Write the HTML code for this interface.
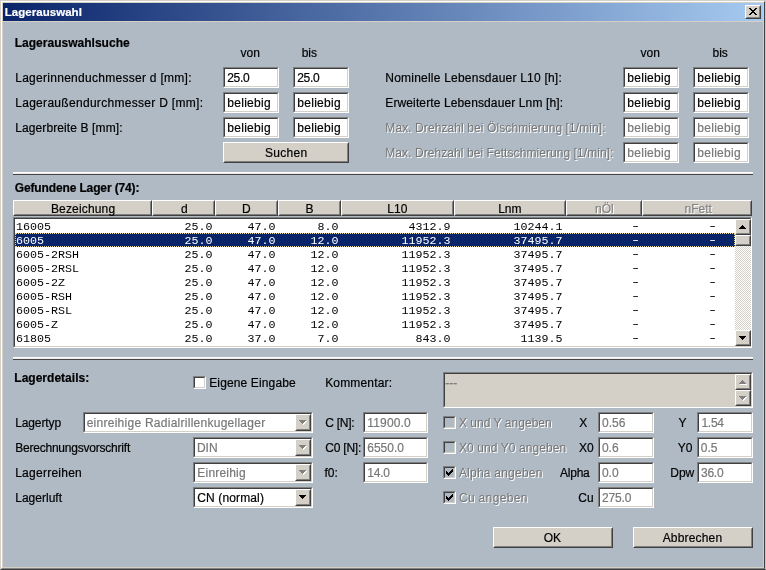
<!DOCTYPE html>
<html lang="de"><head><meta charset="utf-8"><title>Lagerauswahl</title>
<style>
html,body{margin:0;padding:0}
body{width:766px;height:570px;overflow:hidden;background:#b0bac5;position:relative;font-family:"Liberation Sans",sans-serif;font-size:12px;color:#000}
#frame{position:absolute;left:0;top:0;width:766px;height:570px;box-sizing:border-box;border:1px solid;border-color:#d4d0c8 #c8c8c8 #404040 #d4d0c8;}
#frame2{position:absolute;left:1px;top:1px;width:764px;height:568px;box-sizing:border-box;border:1px solid;border-color:#fff #404040 #808080 #fff;}
#frame3{position:absolute;left:2px;top:2px;width:762px;height:566px;box-sizing:border-box;border:1px solid #d4d0c8;}
#title{position:absolute;left:3px;top:3px;width:760px;height:18px;background:linear-gradient(to right,#0a246a,#a6caf0)}
#tline{position:absolute;left:3px;top:21px;width:760px;height:1px;background:#d4d0c8}
.t{position:absolute;white-space:nowrap;line-height:14px;height:14px;-webkit-text-stroke:0.2px}
.w{color:#fff}
.g{color:#787878}
.dis{color:#767676;text-shadow:1px 1px 0 #fff;-webkit-text-stroke:0}
.hd{color:#848484;text-shadow:1px 1px 0 #fff}
.in{position:absolute;box-sizing:border-box;background:#fff;border:1px solid;border-color:#808080 #fff #fff #808080;}
.in::after{content:"";position:absolute;left:0;top:0;right:0;bottom:0;border:1px solid;border-color:#404040 #d4d0c8 #d4d0c8 #404040}
.ta{background:#d4d0c8}
.btn{position:absolute;box-sizing:border-box;background:#d4d0c8;border:1px solid;border-color:#fff #404040 #404040 #fff}
.btn::after{content:"";position:absolute;left:0;top:0;right:0;bottom:0;border:1px solid;border-color:#d4d0c8 #808080 #808080 #d4d0c8}
.hc{position:absolute;box-sizing:border-box;background:#d4d0c8;border:1px solid;border-color:#fff #404040 #404040 #fff}
.hc::after{content:"";position:absolute;left:0;top:0;right:0;bottom:0;border:1px solid;border-color:#d4d0c8 #808080 #808080 #d4d0c8}
.sep{position:absolute;height:2px;background:linear-gradient(#fff 0 1px,#ebe9e4 1px 2px);border-bottom:1px solid #454545}
.ar{position:absolute;left:3px;top:5px}
.cm{position:absolute;left:2px;top:2px}
.xg{position:absolute;left:3px;top:2px}
.ckd{background:#b0bac5}
.row{position:absolute;left:15px;width:720px;height:14px;font-family:"Liberation Mono",monospace;font-size:11.667px;line-height:16px}
.row.sel{background:#0a246a;color:#fff;outline:1px dotted #e8d8a0;outline-offset:-1px}
.c{position:absolute;top:0;white-space:pre}
.d{transform:scaleX(1.45);top:-1px}
#sb{position:absolute;left:735px;top:219px;width:16px;height:127px;background:repeating-conic-gradient(#fff 0 25%,#d4d0c8 0 50%) 0 0/2px 2px}
#txt{position:absolute;left:0;top:0;width:766px;height:570px;will-change:transform}
#close{left:745px;top:5px;width:16px;height:14px}
</style></head><body>
<div id="frame"></div><div id="frame2"></div><div id="frame3"></div>
<div id="title"></div><div id="tline"></div>
<div class="btn" id="close"><svg class="xg" width="8" height="7" viewBox="0 0 8 7" shape-rendering="crispEdges"><rect x="0" y="0" width="2" height="1" fill="#000"/><rect x="6" y="0" width="2" height="1" fill="#000"/><rect x="1" y="1" width="2" height="1" fill="#000"/><rect x="5" y="1" width="2" height="1" fill="#000"/><rect x="2" y="2" width="2" height="1" fill="#000"/><rect x="4" y="2" width="2" height="1" fill="#000"/><rect x="3" y="3" width="2" height="1" fill="#000"/><rect x="2" y="4" width="2" height="1" fill="#000"/><rect x="4" y="4" width="2" height="1" fill="#000"/><rect x="1" y="5" width="2" height="1" fill="#000"/><rect x="5" y="5" width="2" height="1" fill="#000"/><rect x="0" y="6" width="2" height="1" fill="#000"/><rect x="6" y="6" width="2" height="1" fill="#000"/></svg></div>
<div class="in" style="left:223px;top:67px;width:56px;height:21px"></div>
<div class="in" style="left:293px;top:67px;width:56px;height:21px"></div>
<div class="in" style="left:223px;top:92px;width:56px;height:21px"></div>
<div class="in" style="left:293px;top:92px;width:56px;height:21px"></div>
<div class="in" style="left:223px;top:117px;width:56px;height:21px"></div>
<div class="in" style="left:293px;top:117px;width:56px;height:21px"></div>
<div class="in" style="left:623px;top:67px;width:56px;height:21px"></div>
<div class="in" style="left:693px;top:67px;width:56px;height:21px"></div>
<div class="in" style="left:623px;top:92px;width:56px;height:21px"></div>
<div class="in" style="left:693px;top:92px;width:56px;height:21px"></div>
<div class="in" style="left:623px;top:117px;width:56px;height:21px"></div>
<div class="in" style="left:693px;top:117px;width:56px;height:21px"></div>
<div class="in" style="left:623px;top:142px;width:56px;height:21px"></div>
<div class="in" style="left:693px;top:142px;width:56px;height:21px"></div>
<div class="btn" style="left:223px;top:142px;width:126px;height:21px"></div>
<div class="sep" style="left:13px;top:172px;width:740px"></div>
<div class="sep" style="left:13px;top:357px;width:740px"></div>
<div class="hc" style="left:13px;top:200px;width:139px;height:16px"></div>
<div class="hc" style="left:152px;top:200px;width:63px;height:16px"></div>
<div class="hc" style="left:215px;top:200px;width:63px;height:16px"></div>
<div class="hc" style="left:278px;top:200px;width:63px;height:16px"></div>
<div class="hc" style="left:341px;top:200px;width:113px;height:16px"></div>
<div class="hc" style="left:454px;top:200px;width:112px;height:16px"></div>
<div class="hc" style="left:566px;top:200px;width:76px;height:16px"></div>
<div class="hc" style="left:642px;top:200px;width:110px;height:16px"></div>
<div class="in list" style="left:13px;top:217px;width:739px;height:131px"></div>
<div class="in" style="left:83px;top:412px;width:230px;height:21px"></div>
<div class="btn cb" style="left:295px;top:414px;width:16px;height:17px"><svg class="ar" width="9" height="6" viewBox="0 0 9 6" shape-rendering="crispEdges"><rect x="1" y="1" width="7" height="1" fill="#fff"/><rect x="2" y="2" width="5" height="1" fill="#fff"/><rect x="3" y="3" width="3" height="1" fill="#fff"/><rect x="4" y="4" width="1" height="1" fill="#fff"/><rect x="0" y="0" width="7" height="1" fill="#808080"/><rect x="1" y="1" width="5" height="1" fill="#808080"/><rect x="2" y="2" width="3" height="1" fill="#808080"/><rect x="3" y="3" width="1" height="1" fill="#808080"/></svg></div>
<div class="in" style="left:193px;top:437px;width:120px;height:21px"></div>
<div class="btn cb" style="left:295px;top:439px;width:16px;height:17px"><svg class="ar" width="9" height="6" viewBox="0 0 9 6" shape-rendering="crispEdges"><rect x="1" y="1" width="7" height="1" fill="#fff"/><rect x="2" y="2" width="5" height="1" fill="#fff"/><rect x="3" y="3" width="3" height="1" fill="#fff"/><rect x="4" y="4" width="1" height="1" fill="#fff"/><rect x="0" y="0" width="7" height="1" fill="#808080"/><rect x="1" y="1" width="5" height="1" fill="#808080"/><rect x="2" y="2" width="3" height="1" fill="#808080"/><rect x="3" y="3" width="1" height="1" fill="#808080"/></svg></div>
<div class="in" style="left:193px;top:462px;width:120px;height:21px"></div>
<div class="btn cb" style="left:295px;top:464px;width:16px;height:17px"><svg class="ar" width="9" height="6" viewBox="0 0 9 6" shape-rendering="crispEdges"><rect x="1" y="1" width="7" height="1" fill="#fff"/><rect x="2" y="2" width="5" height="1" fill="#fff"/><rect x="3" y="3" width="3" height="1" fill="#fff"/><rect x="4" y="4" width="1" height="1" fill="#fff"/><rect x="0" y="0" width="7" height="1" fill="#808080"/><rect x="1" y="1" width="5" height="1" fill="#808080"/><rect x="2" y="2" width="3" height="1" fill="#808080"/><rect x="3" y="3" width="1" height="1" fill="#808080"/></svg></div>
<div class="in" style="left:193px;top:487px;width:120px;height:21px"></div>
<div class="btn cb" style="left:295px;top:489px;width:16px;height:17px"><svg class="ar" width="9" height="6" viewBox="0 0 9 6" shape-rendering="crispEdges"><rect x="0" y="0" width="7" height="1" fill="#000"/><rect x="1" y="1" width="5" height="1" fill="#000"/><rect x="2" y="2" width="3" height="1" fill="#000"/><rect x="3" y="3" width="1" height="1" fill="#000"/></svg></div>
<div class="in" style="left:363px;top:412px;width:65px;height:21px"></div>
<div class="in" style="left:363px;top:437px;width:65px;height:21px"></div>
<div class="in" style="left:363px;top:462px;width:65px;height:21px"></div>
<div class="in" style="left:598px;top:412px;width:56px;height:21px"></div>
<div class="in" style="left:598px;top:437px;width:56px;height:21px"></div>
<div class="in" style="left:598px;top:462px;width:56px;height:21px"></div>
<div class="in" style="left:598px;top:487px;width:56px;height:21px"></div>
<div class="in" style="left:697px;top:412px;width:56px;height:21px"></div>
<div class="in" style="left:697px;top:437px;width:56px;height:21px"></div>
<div class="in" style="left:697px;top:462px;width:56px;height:21px"></div>
<div class="in ta" style="left:443px;top:372px;width:310px;height:36px"></div>
<div class="btn" style="left:735px;top:374px;width:16px;height:16px"><svg class="ar" width="9" height="6" viewBox="0 0 9 6" shape-rendering="crispEdges"><rect x="1" y="4" width="7" height="1" fill="#fff"/><rect x="2" y="3" width="5" height="1" fill="#fff"/><rect x="3" y="2" width="3" height="1" fill="#fff"/><rect x="4" y="1" width="1" height="1" fill="#fff"/><rect x="0" y="3" width="7" height="1" fill="#808080"/><rect x="1" y="2" width="5" height="1" fill="#808080"/><rect x="2" y="1" width="3" height="1" fill="#808080"/><rect x="3" y="0" width="1" height="1" fill="#808080"/></svg></div>
<div class="btn" style="left:735px;top:390px;width:16px;height:16px"><svg class="ar" width="9" height="6" viewBox="0 0 9 6" shape-rendering="crispEdges"><rect x="1" y="1" width="7" height="1" fill="#fff"/><rect x="2" y="2" width="5" height="1" fill="#fff"/><rect x="3" y="3" width="3" height="1" fill="#fff"/><rect x="4" y="4" width="1" height="1" fill="#fff"/><rect x="0" y="0" width="7" height="1" fill="#808080"/><rect x="1" y="1" width="5" height="1" fill="#808080"/><rect x="2" y="2" width="3" height="1" fill="#808080"/><rect x="3" y="3" width="1" height="1" fill="#808080"/></svg></div>
<div class="in ck" style="left:193px;top:376px;width:13px;height:13px"></div>
<div class="in ck ckd" style="left:443px;top:416px;width:13px;height:13px"></div>
<div class="in ck ckd" style="left:443px;top:441px;width:13px;height:13px"></div>
<div class="in ck ckd" style="left:443px;top:466px;width:13px;height:13px"><svg class="cm" width="7" height="7" viewBox="0 0 7 7" shape-rendering="crispEdges"><rect x="0" y="2" width="1" height="3" fill="#000"/><rect x="1" y="3" width="1" height="3" fill="#000"/><rect x="2" y="4" width="1" height="3" fill="#000"/><rect x="3" y="3" width="1" height="3" fill="#000"/><rect x="4" y="2" width="1" height="3" fill="#000"/><rect x="5" y="1" width="1" height="3" fill="#000"/><rect x="6" y="0" width="1" height="3" fill="#000"/></svg></div>
<div class="in ck ckd" style="left:443px;top:491px;width:13px;height:13px"><svg class="cm" width="7" height="7" viewBox="0 0 7 7" shape-rendering="crispEdges"><rect x="0" y="2" width="1" height="3" fill="#000"/><rect x="1" y="3" width="1" height="3" fill="#000"/><rect x="2" y="4" width="1" height="3" fill="#000"/><rect x="3" y="3" width="1" height="3" fill="#000"/><rect x="4" y="2" width="1" height="3" fill="#000"/><rect x="5" y="1" width="1" height="3" fill="#000"/><rect x="6" y="0" width="1" height="3" fill="#000"/></svg></div>
<div class="btn" style="left:493px;top:527px;width:120px;height:21px"></div>
<div class="btn" style="left:633px;top:527px;width:120px;height:21px"></div>
<div id="sb"></div>
<div class="btn" style="left:735px;top:219px;width:16px;height:16px"><svg class="ar" width="9" height="6" viewBox="0 0 9 6" shape-rendering="crispEdges"><rect x="0" y="3" width="7" height="1" fill="#000"/><rect x="1" y="2" width="5" height="1" fill="#000"/><rect x="2" y="1" width="3" height="1" fill="#000"/><rect x="3" y="0" width="1" height="1" fill="#000"/></svg></div>
<div class="btn" style="left:735px;top:235px;width:16px;height:11px"></div>
<div class="btn" style="left:735px;top:330px;width:16px;height:16px"><svg class="ar" width="9" height="6" viewBox="0 0 9 6" shape-rendering="crispEdges"><rect x="0" y="0" width="7" height="1" fill="#000"/><rect x="1" y="1" width="5" height="1" fill="#000"/><rect x="2" y="2" width="3" height="1" fill="#000"/><rect x="3" y="3" width="1" height="1" fill="#000"/></svg></div>
<div id="txt">
<div class="row" style="top:219px"><span class="c" style="left:1px">16005</span><span class="c" style="right:522.5px">25.0</span><span class="c" style="right:459.5px">47.0</span><span class="c" style="right:396.5px">8.0</span><span class="c" style="right:284.5px">4312.9</span><span class="c" style="right:172.5px">10244.1</span><span class="c d" style="right:96.5px">-</span><span class="c d" style="right:19.5px">-</span></div>
<div class="row sel" style="top:233px"><span class="c" style="left:1px">6005</span><span class="c" style="right:522.5px">25.0</span><span class="c" style="right:459.5px">47.0</span><span class="c" style="right:396.5px">12.0</span><span class="c" style="right:284.5px">11952.3</span><span class="c" style="right:172.5px">37495.7</span><span class="c d" style="right:96.5px">-</span><span class="c d" style="right:19.5px">-</span></div>
<div class="row" style="top:247px"><span class="c" style="left:1px">6005-2RSH</span><span class="c" style="right:522.5px">25.0</span><span class="c" style="right:459.5px">47.0</span><span class="c" style="right:396.5px">12.0</span><span class="c" style="right:284.5px">11952.3</span><span class="c" style="right:172.5px">37495.7</span><span class="c d" style="right:96.5px">-</span><span class="c d" style="right:19.5px">-</span></div>
<div class="row" style="top:261px"><span class="c" style="left:1px">6005-2RSL</span><span class="c" style="right:522.5px">25.0</span><span class="c" style="right:459.5px">47.0</span><span class="c" style="right:396.5px">12.0</span><span class="c" style="right:284.5px">11952.3</span><span class="c" style="right:172.5px">37495.7</span><span class="c d" style="right:96.5px">-</span><span class="c d" style="right:19.5px">-</span></div>
<div class="row" style="top:275px"><span class="c" style="left:1px">6005-2Z</span><span class="c" style="right:522.5px">25.0</span><span class="c" style="right:459.5px">47.0</span><span class="c" style="right:396.5px">12.0</span><span class="c" style="right:284.5px">11952.3</span><span class="c" style="right:172.5px">37495.7</span><span class="c d" style="right:96.5px">-</span><span class="c d" style="right:19.5px">-</span></div>
<div class="row" style="top:289px"><span class="c" style="left:1px">6005-RSH</span><span class="c" style="right:522.5px">25.0</span><span class="c" style="right:459.5px">47.0</span><span class="c" style="right:396.5px">12.0</span><span class="c" style="right:284.5px">11952.3</span><span class="c" style="right:172.5px">37495.7</span><span class="c d" style="right:96.5px">-</span><span class="c d" style="right:19.5px">-</span></div>
<div class="row" style="top:303px"><span class="c" style="left:1px">6005-RSL</span><span class="c" style="right:522.5px">25.0</span><span class="c" style="right:459.5px">47.0</span><span class="c" style="right:396.5px">12.0</span><span class="c" style="right:284.5px">11952.3</span><span class="c" style="right:172.5px">37495.7</span><span class="c d" style="right:96.5px">-</span><span class="c d" style="right:19.5px">-</span></div>
<div class="row" style="top:317px"><span class="c" style="left:1px">6005-Z</span><span class="c" style="right:522.5px">25.0</span><span class="c" style="right:459.5px">47.0</span><span class="c" style="right:396.5px">12.0</span><span class="c" style="right:284.5px">11952.3</span><span class="c" style="right:172.5px">37495.7</span><span class="c d" style="right:96.5px">-</span><span class="c d" style="right:19.5px">-</span></div>
<div class="row" style="top:331px"><span class="c" style="left:1px">61805</span><span class="c" style="right:522.5px">25.0</span><span class="c" style="right:459.5px">37.0</span><span class="c" style="right:396.5px">7.0</span><span class="c" style="right:284.5px">843.0</span><span class="c" style="right:172.5px">1139.5</span><span class="c d" style="right:96.5px">-</span><span class="c d" style="right:19.5px">-</span></div>
<span class="t w" style="left:4.70px;top:5px;letter-spacing:0.046px;font-size:11.5px;font-weight:bold;">Lagerauswahl</span>
<span class="t" style="left:14.70px;top:36px;letter-spacing:0.017px;font-weight:bold;">Lagerauswahlsuche</span>
<span class="t" style="left:240.61px;top:46px;">von</span>
<span class="t" style="left:301.63px;top:46px;">bis</span>
<span class="t" style="left:640.46px;top:46px;">von</span>
<span class="t" style="left:712.53px;top:46px;">bis</span>
<span class="t" style="left:15.20px;top:71px;letter-spacing:0.281px;">Lagerinnenduchmesser d [mm]:</span>
<span class="t" style="left:15.20px;top:96px;letter-spacing:0.301px;">Lageraußendurchmesser D [mm]:</span>
<span class="t" style="left:15.20px;top:121px;letter-spacing:0.109px;">Lagerbreite B [mm]:</span>
<span class="t" style="left:227.18px;top:71px;letter-spacing:-0.250px;">25.0</span>
<span class="t" style="left:297.18px;top:71px;letter-spacing:-0.250px;">25.0</span>
<span class="t" style="left:227.30px;top:96px;letter-spacing:0.287px;">beliebig</span>
<span class="t" style="left:297.30px;top:96px;letter-spacing:0.287px;">beliebig</span>
<span class="t" style="left:227.30px;top:121px;letter-spacing:0.287px;">beliebig</span>
<span class="t" style="left:297.30px;top:121px;letter-spacing:0.287px;">beliebig</span>
<span class="t" style="left:265.00px;top:146px;letter-spacing:0.275px;">Suchen</span>
<span class="t" style="left:385.30px;top:71px;letter-spacing:0.218px;">Nominelle Lebensdauer L10 [h]:</span>
<span class="t" style="left:385.30px;top:96px;letter-spacing:0.121px;">Erweiterte Lebensdauer Lnm [h]:</span>
<span class="t dis" style="left:385.30px;top:121px;letter-spacing:0.094px;">Max. Drehzahl bei Ölschmierung [1/min]:</span>
<span class="t dis" style="left:385.30px;top:146px;letter-spacing:0.068px;">Max. Drehzahl bei Fettschmierung [1/min]:</span>
<span class="t" style="left:627.30px;top:71px;letter-spacing:0.287px;">beliebig</span>
<span class="t" style="left:697.30px;top:71px;letter-spacing:0.287px;">beliebig</span>
<span class="t" style="left:627.30px;top:96px;letter-spacing:0.287px;">beliebig</span>
<span class="t" style="left:697.30px;top:96px;letter-spacing:0.287px;">beliebig</span>
<span class="t g" style="left:627.30px;top:121px;letter-spacing:0.287px;">beliebig</span>
<span class="t g" style="left:697.30px;top:121px;letter-spacing:0.287px;">beliebig</span>
<span class="t g" style="left:627.30px;top:146px;letter-spacing:0.287px;">beliebig</span>
<span class="t g" style="left:697.30px;top:146px;letter-spacing:0.287px;">beliebig</span>
<span class="t" style="left:14.70px;top:181px;letter-spacing:-0.128px;font-weight:bold;">Gefundene Lager (74):</span>
<span class="t" style="left:50.90px;top:202px;letter-spacing:0.162px;">Bezeichung</span>
<span class="t" style="left:181.00px;top:202px;">d</span>
<span class="t" style="left:242.00px;top:202px;">D</span>
<span class="t" style="left:305.50px;top:202px;">B</span>
<span class="t" style="left:387.33px;top:202px;">L10</span>
<span class="t" style="left:498.13px;top:202px;">Lnm</span>
<span class="t hd" style="left:595.00px;top:202px;">nÖl</span>
<span class="t hd" style="left:684.49px;top:202px;">nFett</span>
<span class="t" style="left:14.30px;top:371px;letter-spacing:0.017px;font-weight:bold;">Lagerdetails:</span>
<span class="t" style="left:209.20px;top:376px;letter-spacing:0.134px;">Eigene Eingabe</span>
<span class="t" style="left:325.20px;top:376px;letter-spacing:0.164px;">Kommentar:</span>
<span class="t g" style="left:445.35px;top:376px;">---</span>
<span class="t" style="left:15.20px;top:416px;letter-spacing:-0.118px;">Lagertyp</span>
<span class="t g" style="left:86.70px;top:416px;letter-spacing:0.262px;">einreihige Radialrillenkugellager</span>
<span class="t" style="left:15.20px;top:441px;letter-spacing:-0.218px;">Berechnungsvorschrift</span>
<span class="t g" style="left:196.90px;top:441px;">DIN</span>
<span class="t" style="left:15.20px;top:466px;letter-spacing:0.253px;">Lagerreihen</span>
<span class="t g" style="left:197.30px;top:466px;letter-spacing:0.210px;">Einreihig</span>
<span class="t" style="left:15.20px;top:491px;letter-spacing:0.017px;">Lagerluft</span>
<span class="t" style="left:197.30px;top:491px;letter-spacing:0.126px;">CN (normal)</span>
<span class="t" style="left:325.20px;top:416px;letter-spacing:-0.247px;">C [N]:</span>
<span class="t" style="left:325.20px;top:441px;letter-spacing:-0.201px;">C0 [N]:</span>
<span class="t" style="left:324.45px;top:466px;">f0:</span>
<span class="t g" style="left:367.30px;top:416px;letter-spacing:0.165px;">11900.0</span>
<span class="t g" style="left:367.30px;top:441px;letter-spacing:-0.026px;">6550.0</span>
<span class="t g" style="left:367.33px;top:466px;letter-spacing:-0.250px;">14.0</span>
<span class="t dis" style="left:458.90px;top:416px;letter-spacing:0.038px;">X und Y angeben</span>
<span class="t dis" style="left:458.90px;top:441px;letter-spacing:0.086px;">X0 und Y0 angeben</span>
<span class="t dis" style="left:458.90px;top:466px;letter-spacing:0.228px;">Alpha angeben</span>
<span class="t dis" style="left:458.90px;top:491px;letter-spacing:0.343px;">Cu angeben</span>
<span class="t" style="left:579.20px;top:416px;">X</span>
<span class="t" style="left:578.90px;top:441px;">X0</span>
<span class="t" style="left:560.09px;top:466px;letter-spacing:-0.250px;">Alpha</span>
<span class="t" style="left:578.37px;top:491px;">Cu</span>
<span class="t g" style="left:602.10px;top:416px;letter-spacing:-0.027px;">0.56</span>
<span class="t g" style="left:601.90px;top:441px;">0.6</span>
<span class="t g" style="left:601.90px;top:466px;">0.0</span>
<span class="t g" style="left:602.10px;top:491px;letter-spacing:-0.164px;">275.0</span>
<span class="t" style="left:678.40px;top:416px;">Y</span>
<span class="t" style="left:677.70px;top:441px;">Y0</span>
<span class="t" style="left:670.23px;top:466px;">Dpw</span>
<span class="t g" style="left:701.38px;top:416px;letter-spacing:-0.250px;">1.54</span>
<span class="t g" style="left:700.75px;top:441px;">0.5</span>
<span class="t g" style="left:700.98px;top:466px;letter-spacing:-0.250px;">36.0</span>
<span class="t" style="left:543.78px;top:531px;">OK</span>
<span class="t" style="left:662.70px;top:531px;letter-spacing:0.166px;">Abbrechen</span>
</div>
</body></html>
